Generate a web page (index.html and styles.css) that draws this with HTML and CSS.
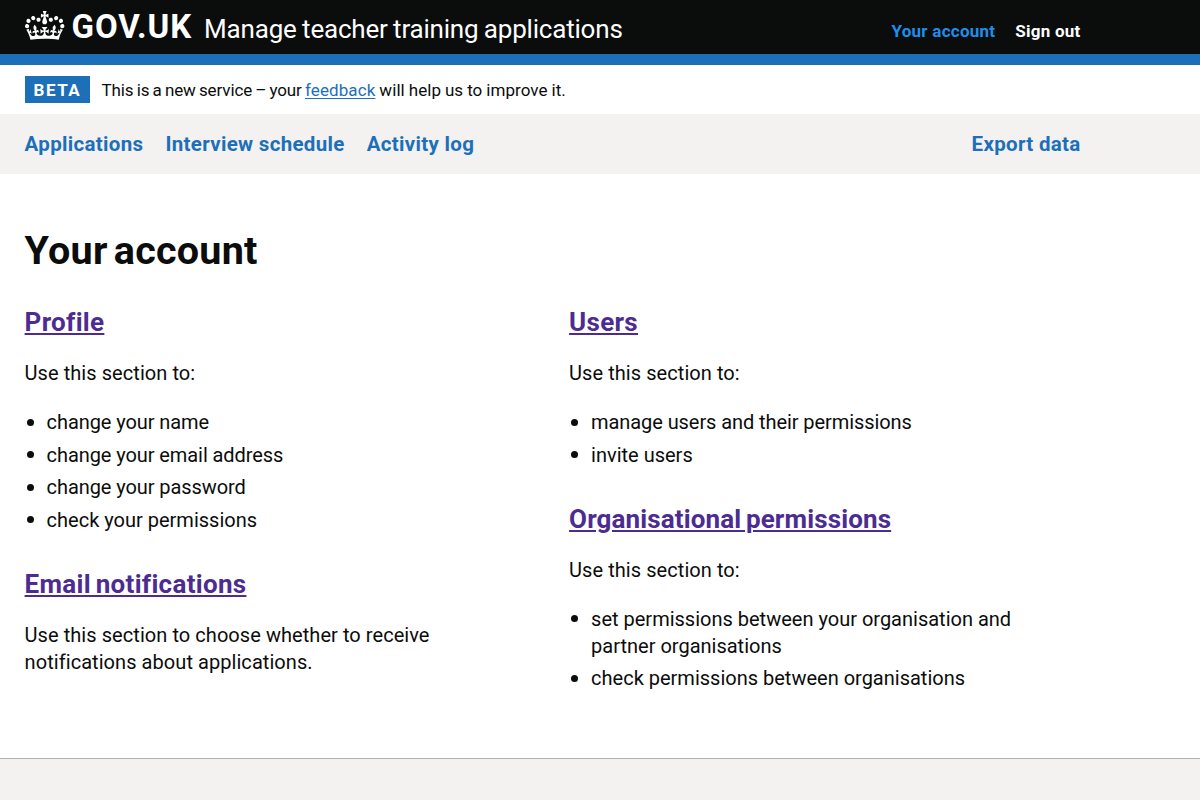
FILE: index.html
```
<!DOCTYPE html>
<html lang="en">
<head>
<meta charset="utf-8">
<title>Your account - Manage teacher training applications - GOV.UK</title>
<link rel="stylesheet" href="styles.css">
</head>
<body>
<header class="header">
  <div class="container header-row">
    <a class="logo" href="#">
      <svg class="crown" viewBox="0 0 132 97" width="39.4" height="29" aria-hidden="true"><path fill="currentColor" fill-rule="evenodd" d="M25 30.2c3.5 1.5 7.7-.2 9.1-3.7 1.5-3.6-.2-7.8-3.9-9.2-3.6-1.4-7.6.3-9.1 3.9-1.4 3.5.3 7.5 3.9 9zM9 39.5c3.6 1.5 7.8-.2 9.2-3.7 1.5-3.6-.2-7.8-3.9-9.1-3.6-1.5-7.6.2-9.1 3.8-1.4 3.5.3 7.5 3.8 9zM4.4 57.2c3.5 1.5 7.7-.2 9.1-3.8 1.5-3.6-.2-7.7-3.9-9.1-3.5-1.5-7.6.3-9.1 3.8-1.4 3.5.3 7.6 3.9 9.1zm38.3-21.4c3.5 1.5 7.7-.2 9.1-3.8 1.5-3.6-.2-7.7-3.9-9.1-3.6-1.5-7.6.3-9.1 3.8-1.3 3.6.4 7.7 3.9 9.1zm64.4-5.6c-3.6 1.5-7.8-.2-9.1-3.7-1.5-3.6.2-7.8 3.8-9.2 3.6-1.4 7.7.3 9.2 3.9 1.3 3.5-.4 7.5-3.9 9zm15.9 9.3c-3.6 1.5-7.7-.2-9.1-3.7-1.5-3.6.2-7.8 3.7-9.1 3.6-1.5 7.7.2 9.2 3.8 1.5 3.5-.3 7.5-3.8 9zm4.7 17.7c-3.6 1.5-7.8-.2-9.2-3.8-1.5-3.6.2-7.7 3.9-9.1 3.6-1.5 7.7.3 9.2 3.8 1.3 3.5-.4 7.6-3.9 9.1zM89.3 35.8c-3.6 1.5-7.8-.2-9.2-3.8-1.4-3.6.2-7.7 3.9-9.1 3.6-1.5 7.7.3 9.2 3.8 1.4 3.6-.3 7.7-3.9 9.1zM69.7 17.7l8.9 4.7V9.3l-8.9 2.8c-.2-.3-.5-.6-.9-.9L72.4 0H59.6l3.5 11.2c-.3.3-.6.5-.9.9l-8.8-2.8v13.1l8.8-4.7c.3.3.6.7.9.9l-5 15.4v.1c-.2.8-.4 1.6-.4 2.4 0 4.1 3.1 7.5 7 8.1h.2c.3 0 .7.1 1 .1.4 0 .7 0 1-.1h.2c4-.6 7.1-4.1 7.1-8.1 0-.8-.1-1.7-.4-2.4V34l-5.1-15.4c.4-.2.7-.6 1-.9zM66 92.8c16.9 0 32.8 1.1 47.1 3.2 4-16.9 8.9-26.7 14-33.5l-9.6-3.4c1 4.9 1.1 7.2 0 10.2-1.5-1.4-3-4.3-4.2-8.7L108.6 76c2.8-2 5-3.2 7.5-3.3-4.4 9.4-10 11.9-13.6 11.2-4.3-.8-6.3-4.6-5.6-7.9 1-4.7 5.7-5.9 8-.5 4.3-8.7-3-11.4-7.6-8.8 7.1-7.2 7.9-13.5 2.1-21.1-8 6.1-8.1 12.3-4.5 20.8-4.7-5.4-12.1-2.5-9.5 6.2 3.4-5.2 7.9-2 7.2 3.1-.6 4.3-6.4 7.8-13.5 7.2-10.3-.9-10.9-8-11.2-13.8 2.5-.5 7.1 1.8 11 7.3L80.2 60c-4.1 4.4-8 5.3-12.3 5.4 1.4-4.4 8-11.6 8-11.6H55.5s6.4 7.2 7.9 11.6c-4.2-.1-8-1-12.3-5.4l1.4 16.4c3.9-5.5 8.5-7.7 10.9-7.3-.3 5.8-.9 12.8-11.1 13.8-7.2.6-12.9-2.9-13.5-7.2-.7-5 3.8-8.3 7.1-3.1 2.7-8.7-4.6-11.6-9.4-6.2 3.7-8.5 3.6-14.7-4.6-20.8-5.8 7.6-5 13.9 2.2 21.1-4.7-2.6-11.9.1-7.7 8.8 2.3-5.5 7.1-4.2 8.1.5.7 3.3-1.3 7.1-5.7 7.9-3.5.7-9-1.8-13.5-11.2 2.5.1 4.7 1.3 7.5 3.3l-4.7-15.4c-1.2 4.4-2.7 7.2-4.3 8.7-1.1-3-.9-5.3 0-10.2l-9.5 3.4c5 6.9 9.9 16.7 14 33.5 14.8-2.1 30.8-3.2 47.7-3.2z"/></svg>
      <span class="logo-text">GOV.UK</span>
    </a>
    <a class="service-name" href="#">Manage teacher training applications</a>
    <nav class="header-nav">
      <a class="current" href="#">Your account</a>
      <a href="#">Sign out</a>
    </nav>
  </div>
</header>
<div class="container phase-banner">
  <strong class="tag">Beta</strong>
  <p class="phase-text"><span class="phase-intro">This is a new service – your </span><a href="#">feedback</a><span class="phase-end"> will help us to improve it.</span></p>
</div>
<nav class="primary-nav">
  <div class="container primary-row">
    <a href="#">Applications</a>
    <a href="#">Interview schedule</a>
    <a href="#">Activity log</a>
    <a class="nav-export" href="#">Export data</a>
  </div>
</nav>
<main class="container main">
  <h1 class="title">Your account</h1>
  <div class="columns">
    <div class="column">
      <section>
        <h2 class="section-title"><a href="#">Profile</a></h2>
        <p class="body">Use this section to:</p>
        <ul class="list">
          <li class="snug">change your name</li>
          <li class="snug">change your email address</li>
          <li class="snug">change your password</li>
          <li>check your permissions</li>
        </ul>
      </section>
      <section>
        <h2 class="section-title"><a href="#">Email notifications</a></h2>
        <p class="body">Use this section to choose whether to receive notifications about applications.</p>
      </section>
    </div>
    <div class="column">
      <section>
        <h2 class="section-title"><a href="#">Users</a></h2>
        <p class="body">Use this section to:</p>
        <ul class="list">
          <li class="snug">manage users and their permissions</li>
          <li>invite users</li>
        </ul>
      </section>
      <section>
        <h2 class="section-title dense"><a href="#">Organisational permissions</a></h2>
        <p class="body">Use this section to:</p>
        <ul class="list">
          <li>set permissions between your organisation and partner organisations</li>
          <li>check permissions between organisations</li>
        </ul>
      </section>
    </div>
  </div>
</main>
<footer class="footer"></footer>
</body>
</html>
```
FILE: styles.css
```
* { box-sizing: border-box; }
body {
  margin: 0;
  height: 800px;
  display: flex;
  flex-direction: column;
  overflow: hidden;
  font-family: Roboto, "Liberation Sans", sans-serif;
  color: #0b0c0c;
  background: #fff;
}
h1, h2, p, ul { margin: 0; padding: 0; }
a { color: #1d70b8; }
.container { width: 1056px; margin-left: 24.6px; }

.header { height: 65px; background: #0b0c0c; border-bottom: 11px solid #1d70b8; flex: none; }
.header-row { display: flex; align-items: flex-start; }
.header a { color: #fff; text-decoration: none; }
.header .logo { display: flex; align-items: flex-start; width: 179.5px; height: 54px; }
.crown { margin-top: 11px; flex: none; overflow: visible; }
.logo-text { margin-left: 7.5px; padding-top: 7px; font-size: 33px; line-height: 39px; font-weight: 700; letter-spacing: 0.9px; }
.service-name { padding-top: 14px; font-size: 26px; line-height: 30px; letter-spacing: -0.2px; word-spacing: -0.8px; white-space: nowrap; }
.header-nav { display: flex; gap: 20px; margin-left: auto; padding-top: 21px; font-size: 17px; font-weight: 700; letter-spacing: 0.25px; line-height: 20px; }
.header .current { color: #1d8feb; }

.phase-banner { height: 49px; flex: none; display: flex; align-items: flex-start; padding-top: 11px; }
.tag { width: 65px; height: 27px; padding-left: 9px; background: #1d70b8; color: #fff; font-size: 17px; line-height: 28px; letter-spacing: 1.5px; text-transform: uppercase; }
.phase-text { margin-left: 12px; font-size: 17px; line-height: 28px; white-space: nowrap; }
.phase-text a { letter-spacing: 0.1px; text-underline-offset: 2px; text-decoration-thickness: 1px; }
.phase-intro { letter-spacing: -0.12px; word-spacing: -0.9px; }
.phase-end { letter-spacing: 0.05px; word-spacing: -0.3px; }

.primary-nav { height: 60px; flex: none; background: #f3f2f1; }
.primary-row { display: flex; gap: 22px; font-size: 20.5px; line-height: 60px; font-weight: 700; letter-spacing: 0.32px; }
.primary-row a { text-decoration: none; }
.nav-export { margin-left: auto; }

.main { padding-top: 49px; height: 584px; flex: none; }
.title { font-size: 39.5px; line-height: 55px; font-weight: 700; letter-spacing: 0.25px; word-spacing: -4px; margin-bottom: 28px; }
.columns { display: flex; }
.column { width: 450px; margin-right: 94.5px; flex: none; }
.column:last-child { margin-right: 0; }
.section-title { font-size: 26px; line-height: 33px; font-weight: 700; letter-spacing: 0.3px; word-spacing: -2px; margin-bottom: 21px; }
.dense { letter-spacing: 0.13px; }
.section-title a { color: #4c2c92; text-underline-offset: 2px; text-decoration-thickness: 2px; }
.body { font-size: 20px; line-height: 27px; letter-spacing: 0.06px; margin-bottom: 22px; }
.list { padding-left: 22px; margin-bottom: 34px; font-size: 20px; line-height: 27px; list-style: none; }
.list li { margin-bottom: 5.5px; }
.list li::before {
  content: "";
  display: inline-block;
  width: 7px;
  height: 7px;
  margin: 0 13px 0 -20px;
  border-radius: 50%;
  background: #0b0c0c;
  vertical-align: 3.5px;
}
.list .snug { letter-spacing: -0.08px; }

.footer { flex: 1; background: #f3f2f1; border-top: 1px solid #b1b4b6; }
```
